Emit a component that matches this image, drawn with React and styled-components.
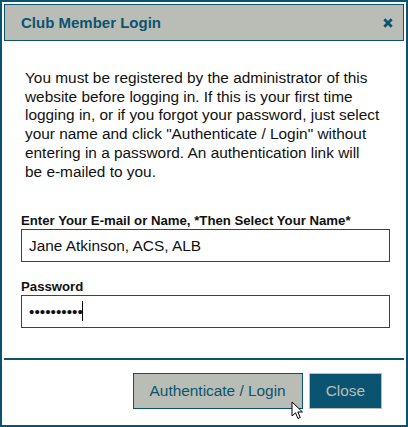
import React, { useEffect, useRef } from 'react';
import styled, { createGlobalStyle } from 'styled-components';

const teal = '#0b5471';
const sage = '#b9bdb5';

const GlobalStyle = createGlobalStyle`
  html, body {
    margin: 0;
    padding: 0;
    background: #ffffff;
  }
  body {
    font-family: "Liberation Sans", Arial, sans-serif;
  }
  * {
    box-sizing: border-box;
  }
`;

const App = () => {
    const passRef = useRef(null);

    useEffect(() => {
        const el = passRef.current;
        if (el) {
            el.focus();
            el.setSelectionRange(el.value.length, el.value.length);
        }
    }, []);

    return (
        <>
            <GlobalStyle/>
            <Dialog>
                <TitleBar>
                    <Title>Club Member Login</Title>
                    <CloseIcon width="10" height="10" viewBox="0 0 10 10" aria-label="close">
                        <path d="M1.3 1.3 L8.7 8.7 M8.7 1.3 L1.3 8.7" stroke={teal} strokeWidth="2.8" strokeLinecap="butt"/>
                    </CloseIcon>
                </TitleBar>
                <Body>
                    <Intro>
                        You must be registered by the administrator of this website before logging in.
                        If this is your first time logging in, or if you forgot your password, just select
                        your name and click "Authenticate / Login" without entering in a password.
                        An authentication link will be{'\u00A0'}e-mailed to you.
                    </Intro>
                    <Field>
                        <Label>Enter Your E-mail or Name, *Then Select Your Name*</Label>
                        <Input type="text" defaultValue="Jane Atkinson, ACS, ALB"/>
                    </Field>
                    <Field $top={17}>
                        <Label>Password</Label>
                        <InputWrap>
                            <Input ref={passRef} type="password" defaultValue="secretpass" $hideCaret/>
                            <Caret/>
                        </InputWrap>
                    </Field>
                </Body>
                <Divider/>
                <Footer>
                    <Button>Authenticate / Login</Button>
                    <Button $primary>Close</Button>
                </Footer>
                <Pointer width="13" height="20" viewBox="0 0 13 20">
                    <path d="M1 1 L1 15 L4.5 11.8 L7 17.5 L9.3 16.5 L6.8 11 L11.5 11 Z"
                          fill="#ffffff" stroke="#000000" strokeWidth="1" strokeLinejoin="miter"/>
                </Pointer>
            </Dialog>
        </>
    );
};

const Dialog = styled.div`
  position: relative;
  width: 408px;
  height: 427px;
  border: 2px solid ${teal};
  padding: 2px;
  display: flex;
  flex-direction: column;
  background: #ffffff;
`

const TitleBar = styled.div`
  height: 37px;
  flex-shrink: 0;
  border: 1px solid ${teal};
  background: ${sage};
  display: flex;
  align-items: center;
  justify-content: space-between;
  padding: 0 10px 0 16px;
`

const Title = styled.div`
  font-size: 15px;
  font-weight: bold;
  color: ${teal};
`

const CloseIcon = styled.svg`
  display: block;
  margin-top: 1px;
`

const Body = styled.div`
  padding: 28px 14px 0 17px;
`

const Intro = styled.p`
  margin: 0 0 32px;
  padding-left: 4px;
  font-size: 15.4px;
  line-height: 18.7px;
  color: #111111;
`

const Field = styled.div`
  display: flex;
  flex-direction: column;
  gap: 1px;
  margin-top: ${({$top}) => $top || 0}px;
`

const Label = styled.label`
  font-size: 13.2px;
  line-height: 15px;
  font-weight: bold;
  color: #111111;
`

const InputWrap = styled.div`
  position: relative;
  display: flex;
`

const Input = styled.input`
  height: 33px;
  width: 369px;
  border: 1px solid ${teal};
  padding: 0 7px;
  font-family: "Liberation Sans", Arial, sans-serif;
  font-size: 15.4px;
  color: #111111;
  background: #ffffff;
  outline: none;
  caret-color: ${({$hideCaret}) => $hideCaret ? 'transparent' : '#000000'};
`

const Caret = styled.span`
  position: absolute;
  left: 61px;
  top: 6px;
  width: 1px;
  height: 20px;
  background: #000000;
  pointer-events: none;
`

const Divider = styled.div`
  margin-top: 30px;
  height: 2px;
  flex-shrink: 0;
  background: ${teal};
`

const Footer = styled.div`
  display: flex;
  justify-content: flex-end;
  gap: 6px;
  padding: 13px 22px 0 0;
`

const Button = styled.button`
  height: 36px;
  padding: 0 16px;
  font-family: "Liberation Sans", Arial, sans-serif;
  font-size: 15.4px;
  cursor: pointer;
  color: ${({$primary}) => $primary ? sage : teal};
  background: ${({$primary}) => $primary ? teal : sage};
  border: 1px solid ${({$primary}) => $primary ? sage : teal};
`

const Pointer = styled.svg`
  position: absolute;
  left: 289px;
  top: 399px;
  pointer-events: none;
`

export default App;
